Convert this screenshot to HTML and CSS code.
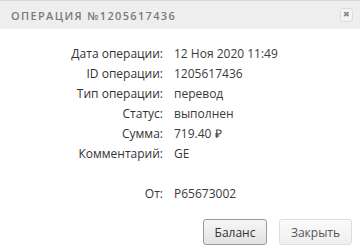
FILE: index.html
```html
<!DOCTYPE html>
<html lang="ru">
<head>
<meta charset="utf-8">
<link rel="stylesheet" href="styles.css">
</head>
<body>
<div class="dialog">
  <div class="header">
    <span class="title">Операция №1205617436</span>
    <button class="close" type="button">&#10006;</button>
  </div>
  <div class="content">
    <div class="row"><span class="label">Дата операции:</span><span class="value">12 Ноя 2020 11:49</span></div>
    <div class="row"><span class="label">ID операции:</span><span class="value">1205617436</span></div>
    <div class="row"><span class="label">Тип операции:</span><span class="value">перевод</span></div>
    <div class="row"><span class="label">Статус:</span><span class="value">выполнен</span></div>
    <div class="row"><span class="label">Сумма:</span><span class="value">719.40 ₽</span></div>
    <div class="row"><span class="label">Комментарий:</span><span class="value">GE</span></div>
    <div class="row"><span class="label"></span><span class="value"></span></div>
    <div class="row"><span class="label">От:</span><span class="value">P65673002</span></div>
  </div>
  <div class="footer">
    <button class="btn btn-primary" type="button">Баланс</button>
    <button class="btn btn-secondary" type="button">Закрыть</button>
  </div>
</div>
</body>
</html>
```
FILE: styles.css
```css
* { box-sizing: border-box; }
html, body { margin: 0; padding: 0; background: #fff; }
body { width: 360px; height: 251px; overflow: hidden; font-family: "Open Sans", "Liberation Sans", sans-serif; color: #333; }
.dialog { display: flex; flex-direction: column; height: 251px; }
.header {
  height: 29px;
  background: #eeeeee;
  border-top: 1px solid #d8d8d8;
  display: flex;
  align-items: center;
  justify-content: space-between;
  padding: 0 7px 0 11px;
}
.title {
  text-transform: uppercase;
  font-size: 11px;
  font-weight: 600;
  letter-spacing: 1.35px;
  color: #7a7a7a;
}
.close {
  width: 13px; height: 14px;
  padding: 0;
  border: 1px solid #dcdcdc;
  border-radius: 3px;
  background: #f4f4f4;
  color: #888;
  font-size: 8px;
  line-height: 12px;
  display: flex; align-items: center; justify-content: center;
}
.content { padding-top: 14px; }
.row { display: flex; height: 20px; align-items: center; font-size: 12px; }
.label { width: 164px; text-align: right; padding-right: 1px; color: #333; }
.value { padding-left: 10px; color: #3a3a3a; }
.footer { margin-top: auto; display: flex; justify-content: flex-end; gap: 12px; padding: 0 8px 6px 0; }
.btn {
  height: 26px;
  font-family: "Open Sans", "Liberation Sans", sans-serif;
  font-size: 12px;
  border-radius: 3px;
  padding: 0;
}
.btn-primary {
  width: 64px;
  border: 1px solid #9a9a9a;
  background: linear-gradient(#f6f6f6, #e2e2e2);
  color: #333;
}
.btn-secondary {
  width: 73px;
  border: 1px solid #dddddd;
  background: linear-gradient(#fbfbfb, #efefef);
  color: #555;
}
```
